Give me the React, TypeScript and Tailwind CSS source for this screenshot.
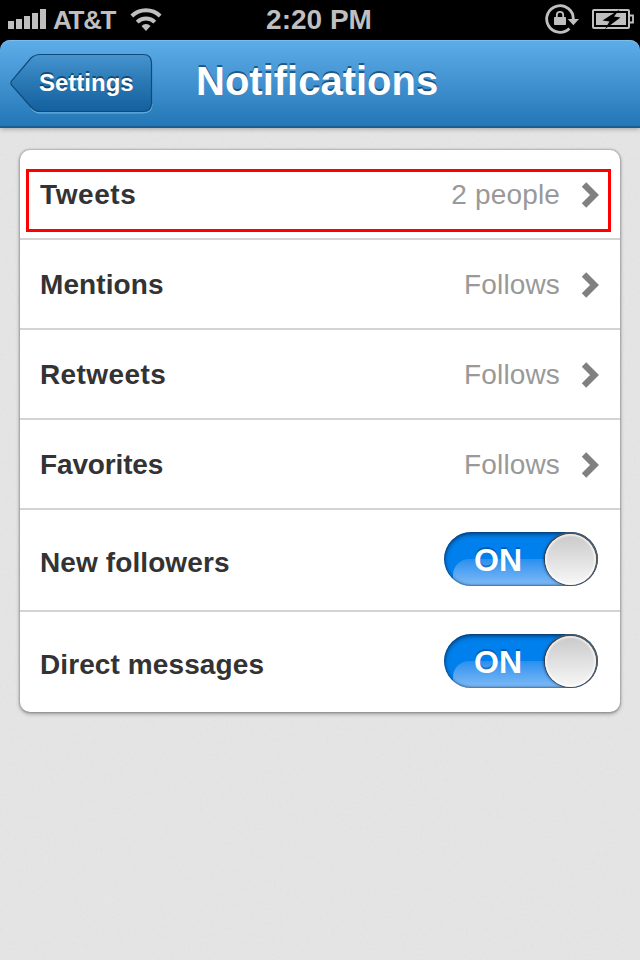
import React from "react";

const FONT = "font-['Liberation_Sans',Arial,sans-serif]";

function Signal() {
  return (
    <svg width="40" height="22" viewBox="0 0 40 22" className="block" fill="#bfbfbf" shapeRendering="crispEdges">
      <rect x="0" y="13" width="6" height="8" />
      <rect x="8" y="11" width="6" height="10" />
      <rect x="16" y="8" width="6" height="13" />
      <rect x="24" y="5" width="6" height="16" />
      <rect x="32" y="1" width="6" height="20" />
    </svg>
  );
}

function Wifi() {
  return (
    <svg width="32" height="24" viewBox="0 0 32 24" className="block" fill="none" stroke="#bfbfbf">
      <path d="M1.800 9a20.500 20.500 0 0 1 28.400 0" strokeWidth="4" />
      <path d="M7.200 15.200a12.500 12.500 0 0 1 17.600 0" strokeWidth="4" />
      <path d="M11.500 19a6.200 6.200 0 0 1 9 0L16 24z" fill="#bfbfbf" stroke="none" />
    </svg>
  );
}

function RotationLock() {
  return (
    <svg width="35" height="32" viewBox="0 0 35 32" className="block">
      <path d="M24.400 25.400A13.300 13.300 0 1 1 28.300 16.500" fill="none" stroke="#bfbfbf" strokeWidth="2.800" />
      <path d="M22.700 16h11.300l-5.600 6.300z" fill="#bfbfbf" />
      <rect x="9" y="14" width="12" height="8" rx="0.800" fill="#bfbfbf" />
      <path d="M11.800 14.500v-2.500a3.200 3.200 0 0 1 6.400 0v2.500" fill="none" stroke="#bfbfbf" strokeWidth="1.800" />
    </svg>
  );
}

function Battery() {
  return (
    <svg width="42" height="22" viewBox="0 0 42 22" className="block">
      <rect x="1" y="2" width="36" height="18" rx="1" fill="none" stroke="#bfbfbf" strokeWidth="2" />
      <rect x="4" y="5" width="30" height="12" fill="#bfbfbf" />
      <path d="M38 7.500h3v7h-3" fill="none" stroke="#bfbfbf" strokeWidth="1.800" />
      <path d="M27.500 1.500L10.500 12.500l7 1L13 21 28.500 9.500l-6.500-1z" fill="#000" />
    </svg>
  );
}

function StatusBar() {
  return (
    <div className="flex h-10 items-start justify-between bg-black text-[#bfbfbf]">
      <div className="flex w-[200px] items-start pl-2">
        <div className="pt-2">
          <Signal />
        </div>
        <span className="ml-[5px] w-[77px] pt-1 text-[26px] leading-[32px] font-bold tracking-[-1.300px]">AT&amp;T</span>
        <div className="pt-[7px]">
          <Wifi />
        </div>
      </div>
      <span className="relative right-px pt-1 text-[28px] leading-[32px] font-bold">2:20 PM</span>
      <div className="flex w-[200px] items-start justify-end pr-[6px]">
        <div className="mr-[12px] pt-[3px]">
          <RotationLock />
        </div>
        <div className="pt-2">
          <Battery />
        </div>
      </div>
    </div>
  );
}

function NavBar() {
  return (
    <div className="bg-black">
      <header className="relative z-10 flex h-[88px] items-start rounded-t-[10px] border-b-2 border-[#1b5c91] bg-linear-to-b from-[#5dade9] to-[#2277b6] pt-[13px] pl-[10px] shadow-[0_1px_5px_rgba(0,0,0,0.3),inset_0_1px_0_#79bdec]">
        <button className="relative flex h-[61px] w-[143px] items-start text-left">
          <svg width="143" height="61" viewBox="0 0 143 61" className="absolute inset-0">
            <defs>
              <linearGradient id="back" x1="0" y1="0" x2="0" y2="1">
                <stop offset="0" stopColor="#4695d1" />
                <stop offset="0.480" stopColor="#2a78b4" />
                <stop offset="1" stopColor="#13609e" />
              </linearGradient>
            </defs>
            <path d="M21 55Q25 59.800 30 59.800H133Q142 59.800 142 51" fill="none" stroke="#65aee0" strokeWidth="1.200" />
            <path d="M21 5Q25 1.500 30 1.500H133Q141.500 1.500 141.500 10V50Q141.500 58.500 133 58.500H30Q25 58.500 21 54L1.500 32Q0.300 30 1.500 28Z" fill="url(#back)" stroke="#104a79" strokeWidth="1.200" />
          </svg>
          <span className="relative block pt-[14px] pl-[29px] text-[24px] leading-[32px] font-bold text-white [text-shadow:0_-2px_0_rgba(0,30,60,0.55)]">Settings</span>
        </button>
        <h1 className="ml-[43px] pt-[5px] text-[40px] leading-[46px] font-bold text-white [text-shadow:0_-2px_0_rgba(0,30,60,0.55)]">Notifications</h1>
      </header>
    </div>
  );
}

function Chevron() {
  return (
    <svg width="20" height="28" viewBox="0 0 20 28" className="block">
      <path d="M4 3.500L14.500 14 4 24.500" fill="none" stroke="#808080" strokeWidth="6.300" />
    </svg>
  );
}

function LinkRow({ label, value, tracking = "" }: { label: string; value: string; tracking?: string }) {
  return (
    <div className="flex h-[90px] items-center border-b-2 border-[#d3d3d3] pr-[20px] pl-5 text-[28px] leading-[32px]">
      <span className={`flex-1 pt-[2px] font-bold text-[#333] ${tracking}`}>{label}</span>
      <span className="mr-[20px] pt-[2px] tracking-[0.150px] text-[#999]">{value}</span>
      <div className="pt-[2px]">
        <Chevron />
      </div>
    </div>
  );
}

function Switch() {
  return (
    <div className="relative flex h-[54px] w-[154px] items-start overflow-hidden rounded-full bg-[#0080ec]">
      <div className="absolute top-[27px] left-[9px] h-[44px] w-[140px] rounded-tl-[16px] bg-linear-to-b from-[#2690ef] to-[#7dbaf6] to-[60%]" />
      <div className="absolute inset-0 rounded-full shadow-[inset_0_2px_5px_rgba(0,35,80,0.7),inset_0_0_2px_1px_rgba(40,60,85,0.5)]" />
      <span className="relative pt-[11px] pl-[30px] text-[32px] leading-[35px] font-bold text-white [text-shadow:0_-2px_0_rgba(0,50,110,0.45)]">ON</span>
      <div className="absolute top-0 right-0 h-[54px] w-[54px] rounded-full bg-[#606060]" />
      <div className="absolute top-[1.500px] right-[2px] h-[51px] w-[51px] rounded-full bg-linear-to-b from-[#c9c9c9] to-[#f8f8f8] shadow-[-1px_0_3px_rgba(0,20,50,0.75),inset_0_0_2px_1.500px_rgba(255,255,255,0.8)]" />
    </div>
  );
}

function SwitchRow({ label, last = false }: { label: string; last?: boolean }) {
  return (
    <div className={last ? "flex h-[100px] items-start pr-[22px] pl-5" : "flex h-[102px] items-start border-b-2 border-[#d3d3d3] pr-[22px] pl-5"}>
      <span className="flex-1 pt-[37px] text-[28px] leading-[32px] font-bold tracking-[0.100px] text-[#333]">{label}</span>
      <div className="pt-[22px]">
        <Switch />
      </div>
    </div>
  );
}

function PaperGrain() {
  return (
    <svg className="absolute inset-0 h-full w-full opacity-[0.05]">
      <filter id="grain">
        <feTurbulence type="fractalNoise" baseFrequency="0.35" numOctaves="3" seed="4" />
        <feColorMatrix type="saturate" values="0" />
      </filter>
      <rect width="100%" height="100%" filter="url(#grain)" />
    </svg>
  );
}

export default function App() {
  return (
    <div className={`${FONT} flex h-[960px] w-[640px] flex-col overflow-hidden bg-[#e5e5e5]`}>
      <StatusBar />
      <NavBar />
      <main className="relative flex-1 px-5 pt-[22px]">
        <PaperGrain />
        <section className="relative rounded-[10px] bg-white shadow-[0_0_2px_1px_rgba(0,0,0,0.2),0_2px_4px_rgba(0,0,0,0.3)]">
          <LinkRow label="Tweets" value="2 people" tracking="tracking-[0.600px]" />
          <LinkRow label="Mentions" value="Follows" tracking="tracking-[0.100px]" />
          <LinkRow label="Retweets" value="Follows" tracking="tracking-[0.400px]" />
          <LinkRow label="Favorites" value="Follows" tracking="tracking-[-0.150px]" />
          <SwitchRow label="New followers" />
          <SwitchRow label="Direct messages" last />
          <div className="absolute top-[19px] left-[6px] h-[63px] w-[585px] border-[3px] border-[#f00]" />
        </section>
      </main>
    </div>
  );
}
